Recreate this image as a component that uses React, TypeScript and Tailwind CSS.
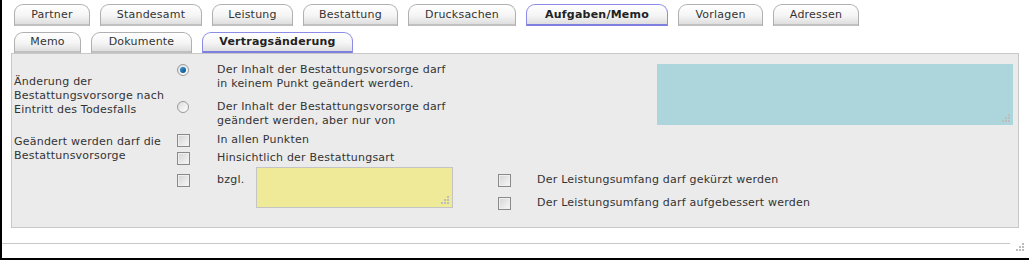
import React from 'react';

const rowOne = [
  { label: 'Partner', w: 'w-[76px]' },
  { label: 'Standesamt', w: 'w-[102px]' },
  { label: 'Leistung', w: 'w-[81px]' },
  { label: 'Bestattung', w: 'w-[95px]' },
  { label: 'Drucksachen', w: 'w-[108px]' },
  { label: 'Aufgaben/Memo', w: 'w-[142px]', active: true },
  { label: 'Vorlagen', w: 'w-[85px]' },
  { label: 'Adressen', w: 'w-[86px]' },
];

const rowTwo = [
  { label: 'Memo', w: 'w-[67px]' },
  { label: 'Dokumente', w: 'w-[101px]' },
  { label: 'Vertragsänderung', w: 'w-[151px]', active: true },
];

const Tab: React.FC<{ label: string; w: string; active?: boolean; h: string }> = ({ label, w, active, h }) => (
  <div
    className={`${w} ${h} flex items-center justify-center rounded-t-[9px] border border-b-0 bg-gradient-to-b from-white via-[#f5f5f5] to-[#d9d9d9] ${
      active ? 'border-[#8c8ce6] shadow-[inset_0_-2px_0_#7f7fe0] font-bold text-[#222]' : 'border-[#b0b0b0] shadow-[inset_0_-2px_0_#c0c0c0] text-[#333]'
    }`}
  >
    <span className="-mt-[2px]">{label}</span>
  </div>
);

const Grip = () => (
  <svg width="10" height="10" viewBox="0 0 10 10" className="absolute right-[2px] bottom-[2px]">
    <rect x="7" y="1" width="2" height="2" fill="#bdbdbd" />
    <rect x="4" y="4" width="2" height="2" fill="#bdbdbd" />
    <rect x="7" y="4" width="2" height="2" fill="#bdbdbd" />
    <rect x="1" y="7" width="2" height="2" fill="#bdbdbd" />
    <rect x="4" y="7" width="2" height="2" fill="#bdbdbd" />
    <rect x="7" y="7" width="2" height="2" fill="#bdbdbd" />
  </svg>
);

const Checkbox = () => (
  <div className="w-[13px] h-[13px] border border-[#8a8a8a] bg-gradient-to-br from-[#d4d4d4] to-[#f8f8f8] shadow-[inset_0_0_0_1px_#efefef]" />
);

const Radio: React.FC<{ checked?: boolean }> = ({ checked }) => (
  <div className="w-[12px] h-[12px] rounded-full border border-[#9a9a9a] bg-gradient-to-br from-[#dcdcdc] to-white flex items-center justify-center">
    {checked && <div className="w-[6px] h-[6px] rounded-full bg-gradient-to-br from-[#3c9ad6] to-[#0a4f85]" />}
  </div>
);

export default function App() {
  return (
    <div className="w-[1029px] h-[260px] bg-white border-l-2 border-b-2 border-black text-[11px] leading-[14px] tracking-[0.22px] text-[#333] font-['DejaVu_Sans',Verdana,sans-serif] overflow-hidden">
      <div className="flex gap-[10px] pl-[12px] pt-[4px]">
        {rowOne.map(t => (
          <Tab key={t.label} {...t} h="h-[22px]" />
        ))}
      </div>
      <div className="flex gap-[10px] pl-[12px] pt-[6px]">
        {rowTwo.map(t => (
          <Tab key={t.label} {...t} h="h-[21px]" />
        ))}
      </div>

      <div className="ml-[9px] w-[1008px] h-[175px] border border-[#c8c8c8] bg-[#ebebeb] pl-[2px] pt-[9px]">
        <div className="flex items-start">
          <div className="flex items-center">
            <div className="w-[163px]">
              Änderung der
              <br />
              Bestattungsvorsorge nach
              <br />
              Eintritt des Todesfalls
            </div>
            <div className="flex flex-col gap-[9px]">
              <div className="flex items-start">
                <div className="w-[40px] h-[14px] flex items-center">
                  <Radio checked />
                </div>
                <div>
                  Der Inhalt der Bestattungsvorsorge darf
                  <br />
                  in keinem Punkt geändert werden.
                </div>
              </div>
              <div className="flex items-start">
                <div className="w-[40px] h-[14px] flex items-center">
                  <Radio />
                </div>
                <div>
                  Der Inhalt der Bestattungsvorsorge darf
                  <br />
                  geändert werden, aber nur von
                </div>
              </div>
            </div>
          </div>
          <div className="relative ml-auto mr-[5px] mt-[1px] w-[356px] h-[61px] bg-[#acd6dc]">
            <Grip />
          </div>
        </div>

        <div className="flex items-center mt-[5px]">
          <div className="w-[163px]">
            Geändert werden darf die
            <br />
            Bestattunsvorsorge
          </div>
          <div className="flex flex-col gap-[4px]">
            <div className="flex items-center h-[14px]">
              <div className="w-[40px]">
                <Checkbox />
              </div>
              <span>In allen Punkten</span>
            </div>
            <div className="flex items-center h-[14px]">
              <div className="w-[40px]">
                <Checkbox />
              </div>
              <span>Hinsichtlich der Bestattungsart</span>
            </div>
          </div>
        </div>

        <div className="flex items-start mt-[8px]">
          <div className="w-[163px]" />
          <div className="w-[40px] h-[14px] flex items-center">
            <Checkbox />
          </div>
          <div className="w-[39px]">bzgl.</div>
          <div className="relative -mt-[6px] w-[197px] h-[41px] border border-[#c4c4c4] bg-[#eeea98]">
            <Grip />
          </div>
          <div className="ml-[45px] flex flex-col gap-[9px]">
            <div className="flex items-center h-[14px]">
              <div className="w-[39px]">
                <Checkbox />
              </div>
              <span>Der Leistungsumfang darf gekürzt werden</span>
            </div>
            <div className="flex items-center h-[14px]">
              <div className="w-[39px]">
                <Checkbox />
              </div>
              <span>Der Leistungsumfang darf aufgebessert werden</span>
            </div>
          </div>
        </div>
      </div>

      <div className="mt-[15px] flex items-start">
        <div className="w-[1008px] border-t border-[#c8c8c8]" />
        <div className="relative w-[17px] h-[14px] -mt-[3px]">
          <Grip />
        </div>
      </div>
    </div>
  );
}
